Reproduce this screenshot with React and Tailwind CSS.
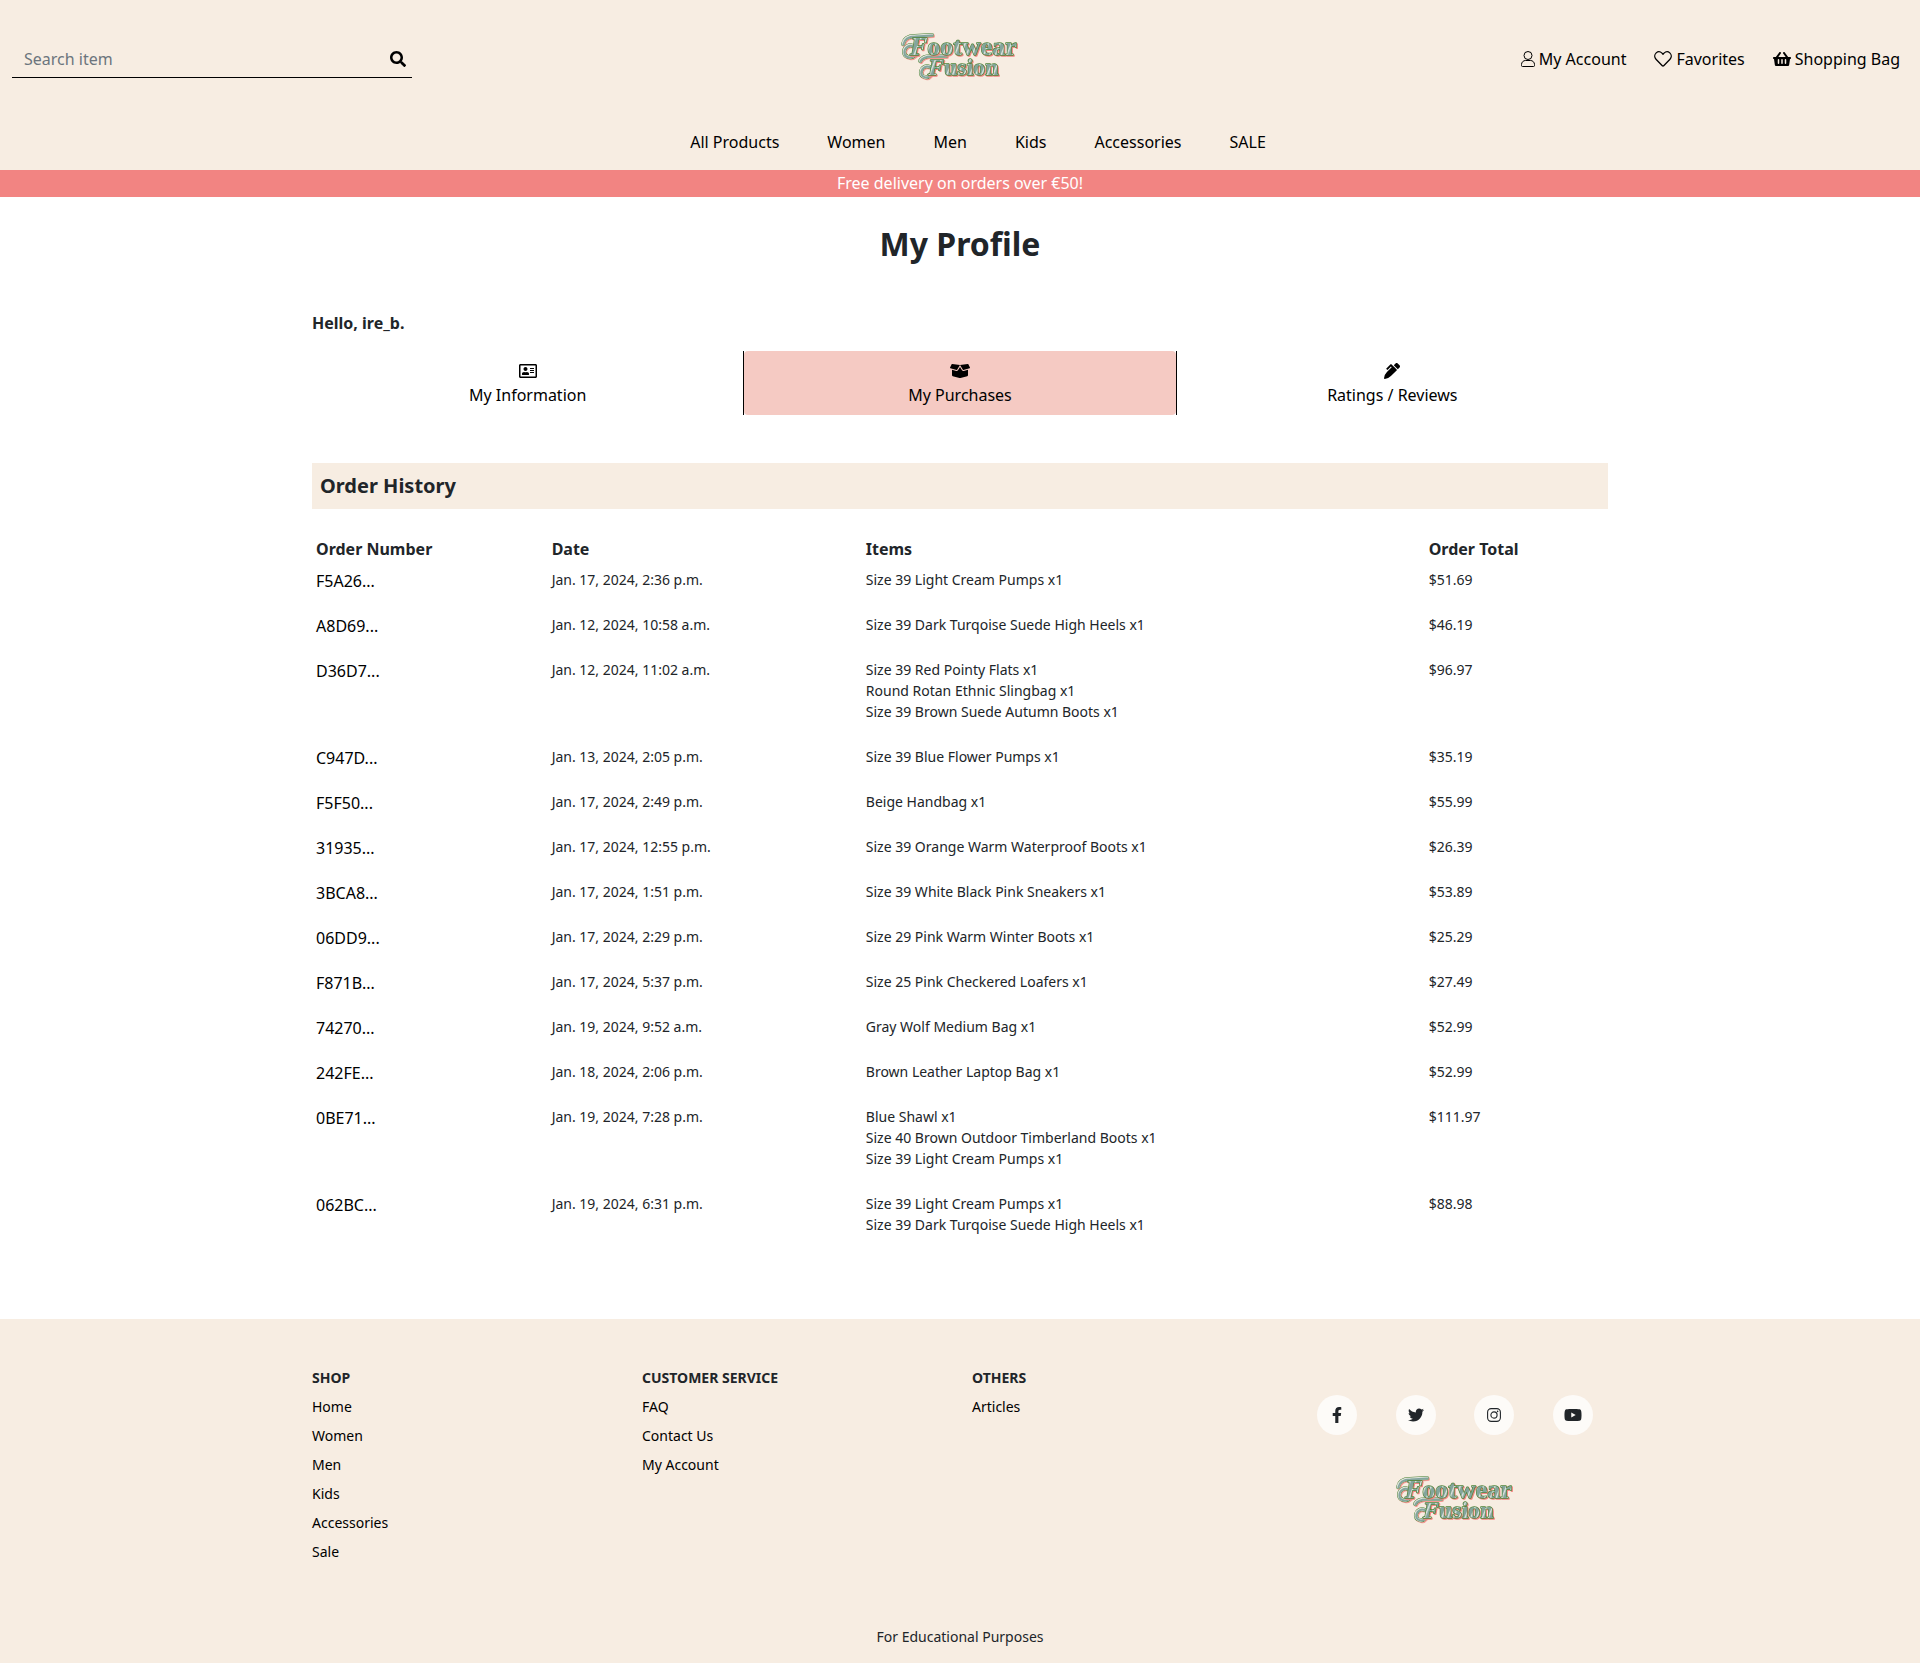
import {
  FaSearch,
  FaShoppingBasket,
  FaRegAddressCard,
  FaBoxOpen,
  FaPenAlt,
  FaFacebookF,
  FaTwitter,
  FaYoutube,
} from "react-icons/fa";

const NAV = ["All Products", "Women", "Men", "Kids", "Accessories", "SALE"];

const ORDERS = [
  ["F5A26...", "Jan. 17, 2024, 2:36 p.m.", ["Size 39 Light Cream Pumps x1"], "$51.69"],
  ["A8D69...", "Jan. 12, 2024, 10:58 a.m.", ["Size 39 Dark Turqoise Suede High Heels x1"], "$46.19"],
  [
    "D36D7...",
    "Jan. 12, 2024, 11:02 a.m.",
    ["Size 39 Red Pointy Flats x1", "Round Rotan Ethnic Slingbag x1", "Size 39 Brown Suede Autumn Boots x1"],
    "$96.97",
  ],
  ["C947D...", "Jan. 13, 2024, 2:05 p.m.", ["Size 39 Blue Flower Pumps x1"], "$35.19"],
  ["F5F50...", "Jan. 17, 2024, 2:49 p.m.", ["Beige Handbag x1"], "$55.99"],
  ["31935...", "Jan. 17, 2024, 12:55 p.m.", ["Size 39 Orange Warm Waterproof Boots x1"], "$26.39"],
  ["3BCA8...", "Jan. 17, 2024, 1:51 p.m.", ["Size 39 White Black Pink Sneakers x1"], "$53.89"],
  ["06DD9...", "Jan. 17, 2024, 2:29 p.m.", ["Size 29 Pink Warm Winter Boots x1"], "$25.29"],
  ["F871B...", "Jan. 17, 2024, 5:37 p.m.", ["Size 25 Pink Checkered Loafers x1"], "$27.49"],
  ["74270...", "Jan. 19, 2024, 9:52 a.m.", ["Gray Wolf Medium Bag x1"], "$52.99"],
  ["242FE...", "Jan. 18, 2024, 2:06 p.m.", ["Brown Leather Laptop Bag x1"], "$52.99"],
  [
    "0BE71...",
    "Jan. 19, 2024, 7:28 p.m.",
    ["Blue Shawl x1", "Size 40 Brown Outdoor Timberland Boots x1", "Size 39 Light Cream Pumps x1"],
    "$111.97",
  ],
  [
    "062BC...",
    "Jan. 19, 2024, 6:31 p.m.",
    ["Size 39 Light Cream Pumps x1", "Size 39 Dark Turqoise Suede High Heels x1"],
    "$88.98",
  ],
];

const FOOTER = [
  ["SHOP", ["Home", "Women", "Men", "Kids", "Accessories", "Sale"]],
  ["CUSTOMER SERVICE", ["FAQ", "Contact Us", "My Account"]],
  ["OTHERS", ["Articles"]],
];

function UserIcon() {
  return (
    <svg viewBox="0 0 14 16" className="h-4 w-[14px] fill-none stroke-current" aria-hidden="true">
      <circle cx="7" cy="4.5" r="4" />
      <path d="M4.6 9.5 H9.4 A4 4 0 0 1 13.5 13.5 V14.5 A1 1 0 0 1 12.5 15.5 H1.5 A1 1 0 0 1 .5 14.5 V13.5 A4 4 0 0 1 4.6 9.5 Z" />
    </svg>
  );
}

function HeartIcon() {
  return (
    <svg viewBox="0 0 18 18" className="h-[18px] w-[18px] fill-none stroke-current" strokeWidth="1.3" aria-hidden="true">
      <path
        d="M9 4.2 L8 3.1 C6.2 1.4 3.8 1.4 2.2 2.9 C.3 4.7 .3 7.4 2 9.2 L8.3 15.7 C8.7 16.1 9.3 16.1 9.7 15.7 L16 9.2 C17.7 7.4 17.7 4.7 15.8 2.9 C14.2 1.4 11.8 1.4 10 3.1 Z"
        strokeLinejoin="round"
      />
    </svg>
  );
}

function InstagramIcon({ className }) {
  return (
    <svg viewBox="0 0 18 16" className={className} aria-hidden="true">
      <rect x="2.6" y="1.6" width="12.8" height="12.8" rx="3.6" fill="none" stroke="currentColor" strokeWidth="1.1" />
      <circle cx="9" cy="8" r="3.1" fill="none" stroke="currentColor" strokeWidth="1.1" />
      <circle cx="12.6" cy="4.4" r=".8" fill="currentColor" />
    </svg>
  );
}

const SOCIAL = [
  ["Facebook", FaFacebookF],
  ["Twitter", FaTwitter],
  ["Instagram", InstagramIcon],
  ["YouTube", FaYoutube],
];

// Ornamental curls that trail from the capitals of the wordmark.
const FLOURISHES =
  "M3 12 C4 6 9 4 15 4 L32 3 M15 23 C11 27 4 25 4 20 C4 15 9 12 13 14 " +
  "M20 29 C22 25 26 24 31 24 L46 24 M30 43 C27 47 20 45 21 39 C22 35 26 33 30 35";

function Logo() {
  return (
    <svg
      viewBox="0 0 120 50"
      className="h-[50px] w-[120px] font-['Liberation_Serif',serif] font-bold"
      role="img"
      aria-label="Footwear Fusion"
    >
      <defs>
        <linearGradient id="metal" x1="0" y1="0" x2="5" y2="2" gradientUnits="userSpaceOnUse" spreadMethod="repeat">
          <stop offset="0" stopColor="#dfe6e0" />
          <stop offset="0.3" stopColor="#84a59d" />
          <stop offset="0.8" stopColor="#84a59d" />
          <stop offset="1" stopColor="#dfe6e0" />
        </linearGradient>
      </defs>
      <g fill="none" strokeLinejoin="round" strokeLinecap="round">
        <path d={FLOURISHES} stroke="#f28482" strokeWidth="4" strokeOpacity=".8" transform="translate(1 1)" />
        <path d={FLOURISHES} stroke="#4f8439" strokeWidth="4" />
        <path d={FLOURISHES} stroke="#dfe3dc" strokeWidth="3" />
        <path d={FLOURISHES} stroke="#84a59d" strokeWidth="2" transform="translate(0.4 0.4)" />
      </g>
      <g
        fill="url(#metal)"
        stroke="#4f8439"
        strokeWidth="1.4"
        paintOrder="stroke"
        strokeLinejoin="round"
        className="drop-shadow-[1px_1px_0px_#f28482]"
      >
        <text x="10" y="23" fontSize="26">
          <tspan fontStyle="italic">F</tspan>ootwear
        </text>
        <text x="28" y="43" fontSize="24">
          <tspan fontStyle="italic">F</tspan>usion
        </text>
      </g>
    </svg>
  );
}

function Tab({ icon: Icon, iconClass, label, active }) {
  return (
    <li className={active ? "flex-1 border-x border-black" : "flex-1"}>
      <a
        href="#"
        className={
          active
            ? "flex flex-col items-center rounded bg-[#f5cac3] p-2"
            : "flex flex-col items-center rounded p-2"
        }
      >
        <span className="flex h-6 items-center">
          <Icon className={iconClass} />
        </span>
        {label}
      </a>
    </li>
  );
}

export default function App() {
  return (
    <div className="bg-white font-['Noto_Sans',sans-serif] text-base text-[#212529]">
      <header className="bg-[#f7ede2] text-black">
        <div className="grid grid-cols-3 items-center px-3 pt-8">
          <form className="flex h-[38px] w-[400px] max-w-full items-center border-b border-black">
            <input
              type="search"
              aria-label="Search item"
              placeholder="Search item"
              className="min-w-0 flex-1 bg-transparent px-3 placeholder:text-[#6c757d] focus:outline-none"
            />
            <button type="submit" aria-label="Search" className="px-[6px]">
              <FaSearch className="h-4 w-4" />
            </button>
          </form>
          <a href="#" className="justify-self-center pb-1">
            <Logo />
          </a>
          <div className="flex justify-end gap-7 pr-2">
            <a href="#" className="flex items-center gap-1">
              <UserIcon />
              My Account
            </a>
            <a href="#" className="flex items-center gap-1">
              <HeartIcon />
              Favorites
            </a>
            <a href="#" className="flex items-center gap-1">
              <FaShoppingBasket className="h-4 w-[18px]" />
              Shopping Bag
            </a>
          </div>
        </div>
        <nav className="flex justify-center gap-12 pt-11 pb-4 pl-9">
          {NAV.map((n) => (
            <a href="#" key={n}>
              {n}
            </a>
          ))}
        </nav>
      </header>
      <p className="bg-[#f28482] pt-px pb-[2px] text-center text-white">Free delivery on orders over €50!</p>

      <main className="mx-auto max-w-[1320px] px-3 pt-6 pb-16">
        <h1 className="text-center text-[32px] leading-[46px] font-bold">My Profile</h1>
        <p className="mt-11 font-bold">Hello, ire_b.</p>
        <ul className="mt-4 flex text-black">
          <Tab icon={FaRegAddressCard} iconClass="h-4 w-[18px]" label="My Information" />
          <Tab icon={FaBoxOpen} iconClass="h-4 w-5" label="My Purchases" active />
          <Tab icon={FaPenAlt} iconClass="h-4 w-4" label="Ratings / Reviews" />
        </ul>
        <h2 className="mt-12 bg-[#f7ede2] p-2 text-xl leading-[30px] font-bold">Order History</h2>
        <table className="mt-6 w-full table-fixed text-left">
          <colgroup>
            <col className="w-[18%]" />
            <col className="w-[24%]" />
            <col className="w-[43%]" />
            <col className="w-[14%]" />
          </colgroup>
          <thead>
            <tr>
              {["Order Number", "Date", "Items", "Order Total"].map((h) => (
                <th key={h} scope="col" className="p-1 font-bold">
                  {h}
                </th>
              ))}
            </tr>
          </thead>
          <tbody className="align-top text-sm leading-[21px]">
            {ORDERS.map(([id, date, items, total]) => (
              <tr key={id}>
                <td className="p-1 text-base text-black">
                  <a href="#">{id}</a>
                </td>
                <td className="p-1">{date}</td>
                <td className="p-1">
                  <ul className="mb-4">
                    {items.map((i) => (
                      <li key={i}>{i}</li>
                    ))}
                  </ul>
                </td>
                <td className="p-1">{total}</td>
              </tr>
            ))}
          </tbody>
        </table>
      </main>

      <footer className="bg-[#f7ede2] pt-12 pb-4 text-sm leading-[21px]">
        <div className="mx-auto grid max-w-[1320px] grid-cols-4">
          {FOOTER.map(([title, links]) => (
            <section key={title} className="px-3">
              <h3 className="mb-2 font-bold">{title}</h3>
              <ul className="flex flex-col gap-2 text-black">
                {links.map((l) => (
                  <li key={l}>
                    <a href="#">{l}</a>
                  </li>
                ))}
              </ul>
            </section>
          ))}
          <section className="flex flex-col items-center px-2 pt-7">
            <ul className="flex w-full justify-around">
              {SOCIAL.map(([name, Icon]) => (
                <li key={name}>
                  <a
                    href="#"
                    aria-label={name}
                    className="flex h-10 w-10 items-center justify-center rounded-full bg-white/75"
                  >
                    <Icon className="h-4 w-[18px]" />
                  </a>
                </li>
              ))}
            </ul>
            <a href="#" className="mt-10">
              <Logo />
            </a>
          </section>
        </div>
        <p className="mt-16 text-center">For Educational Purposes</p>
      </footer>
    </div>
  );
}
